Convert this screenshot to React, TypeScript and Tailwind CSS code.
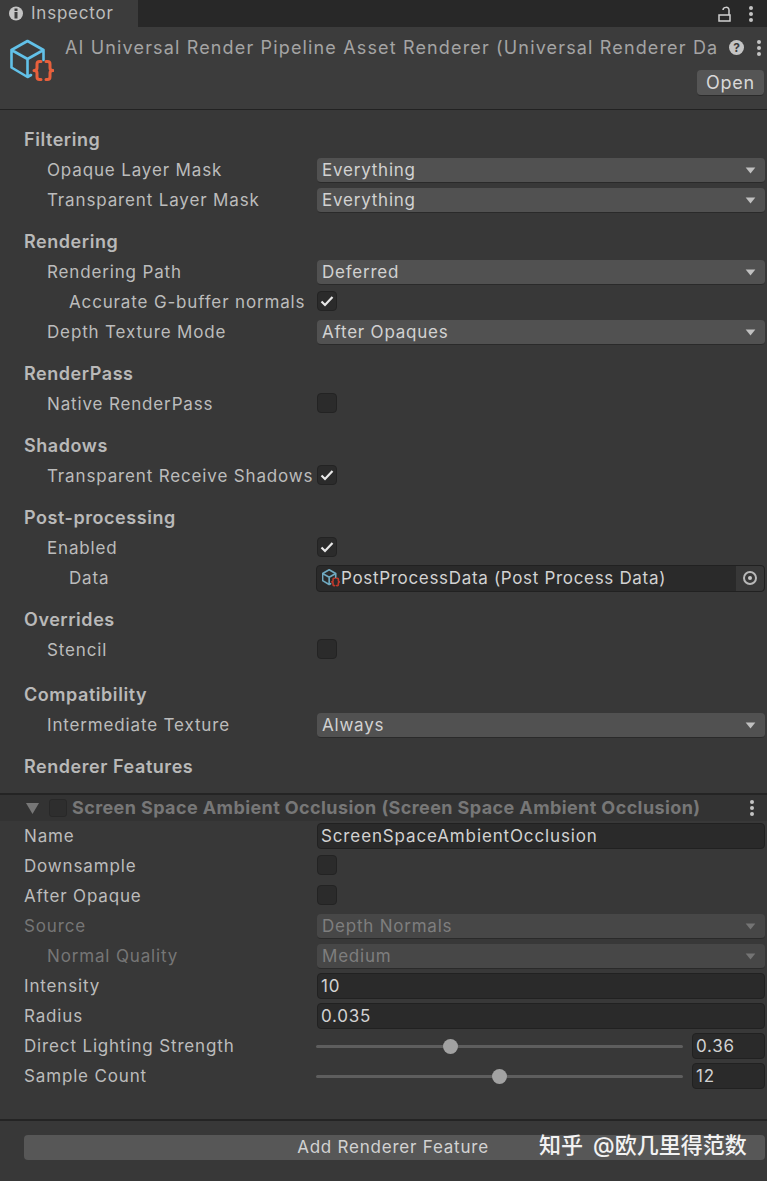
import { CSSProperties } from "react"

const font = { fontFamily: "Inter, 'Noto Sans CJK SC', sans-serif" } as CSSProperties

function CubeIcon({ size, small = false }: { size: number; small?: boolean }) {
  return (
    <svg width={size} height={size} viewBox="0 0 44 44" fill="none">
      <path
        d="M1.5 11 L17.5 2 L33.5 11 L33.5 21 M1.5 11 L1.5 28.5 L17.5 38 L21 36 M1.5 11 L17.5 20 L33.5 11 M17.5 20 L17.5 38"
        stroke={small ? "#6fa9c0" : "#62c1e8"}
        strokeWidth={small ? 4 : 2.6}
        strokeLinejoin="round"
        strokeLinecap="round"
      />
      <path
        d="M31 22.5 H29.5 Q27 22.5 27 25 V29 Q27 31.5 24 31.5 Q27 31.5 27 34 V38 Q27 40.5 29.5 40.5 H31 M36 22.5 H37.5 Q40 22.5 40 25 V29 Q40 31.5 43 31.5 Q40 31.5 40 34 V38 Q40 40.5 37.5 40.5 H36"
        stroke={small ? "#c0392b" : "#e8603c"}
        strokeWidth={small ? 4 : 3}
        strokeLinecap="round"
        strokeLinejoin="round"
      />
    </svg>
  )
}

function Dots() {
  return (
    <div className="flex flex-col gap-[2px] items-center w-[4px]">
      <div className="w-[4px] h-[4px] rounded-full bg-[#c4c4c4]" />
      <div className="w-[4px] h-[4px] rounded-full bg-[#c4c4c4]" />
      <div className="w-[4px] h-[4px] rounded-full bg-[#c4c4c4]" />
    </div>
  )
}

function Section({ title, className = "mt-[12px]" }: { title: string; className?: string }) {
  return (
    <div className={`h-[30px] flex items-center pl-[24px] font-semibold text-[18px] tracking-[0.55px] text-[#b9b9b9] ${className}`}>
      {title}
    </div>
  )
}

function Row({
  label,
  indent = 1,
  dim = false,
  children,
}: {
  label: string
  indent?: number
  dim?: boolean
  children?: React.ReactNode
}) {
  const pad = indent === 0 ? "pl-[24px]" : indent === 1 ? "pl-[47px]" : "pl-[69px]"
  return (
    <div className="h-[30px] flex items-center">
      <div className={`w-[316px] shrink-0 whitespace-nowrap tracking-[0.85px] ${pad} ${dim ? "text-[#767676]" : "text-[#bcbcbc]"}`}>
        {label}
      </div>
      <div className="flex-1 min-w-0 pl-px pr-[2px]">{children}</div>
    </div>
  )
}

function Dropdown({ value, dim = false }: { value: string; dim?: boolean }) {
  return (
    <div
      className={`h-[25px] rounded-[4px] pl-[5px] pr-[9px] pt-px flex items-center justify-between border-b border-[#2a2a2a] ${
        dim ? "bg-[#474747] text-[#7e7e7e]" : "bg-[#515151] text-[#d2d2d2]"
      }`}
    >
      <span>{value}</span>
      <svg width="11" height="7" viewBox="0 0 12 8">
        <path d="M0.5 0.5 L11.5 0.5 L6 7.5 Z" fill={dim ? "#747474" : "#c0c0c0"} />
      </svg>
    </div>
  )
}

function Check({ on = false }: { on?: boolean }) {
  return (
    <div className="w-[20px] h-[20px] mb-[2px] rounded-[4px] bg-[#2b2b2b] border border-[#232323] flex items-center justify-center">
      {on && (
        <svg width="14" height="12" viewBox="0 0 14 12" fill="none">
          <path d="M1.5 6.5 L5 10 L12.5 2" stroke="#e8e8e8" strokeWidth="2.2" />
        </svg>
      )}
    </div>
  )
}

function TextField({ value, className = "" }: { value: string; className?: string }) {
  return (
    <div className={`h-[26px] rounded-[4px] bg-[#2a2a2a] border border-[#212121] pl-[3px] flex items-center text-[#d2d2d2] ${className}`}>
      {value}
    </div>
  )
}

function Slider({ pos, value }: { pos: number; value: string }) {
  return (
    <div className="flex items-center -ml-px">
      <div className="relative w-[367px] h-[3px] rounded-full bg-[#5e5e5e]">
        <div
          className="absolute top-[-6px] w-[15px] h-[15px] rounded-full bg-[#a2a2a2]"
          style={{ left: pos }}
        />
      </div>
      <TextField value={value} className="ml-[9px] flex-1" />
    </div>
  )
}

export default function App() {
  return (
    <div style={font} className="w-[767px] h-[1181px] overflow-hidden bg-[#383838] text-[17px] tracking-[0.78px] leading-none">
      {/* tab bar */}
      <div className="h-[27px] bg-[#282828] flex items-stretch">
        <div className="w-[138px] bg-[#3c3c3c] flex items-center pl-[9px] gap-[8px] text-[#bdbdbd]">
          <svg width="14" height="15" viewBox="0 0 14 15">
            <circle cx="7" cy="7.5" r="7" fill="#c4c4c4" />
            <rect x="5.5" y="2.5" width="3" height="2.5" fill="#3c3c3c" />
            <rect x="5.5" y="6" width="3" height="6.5" fill="#3c3c3c" />
          </svg>
          <span>Inspector</span>
        </div>
        <div className="flex-1 flex items-center justify-end pr-[14px] gap-[18px]">
          <svg width="13" height="16" viewBox="0 0 13 16" fill="none" stroke="#d0d0d0" strokeWidth="1.5">
            <path d="M1 9 H12 V15 H1 Z" />
            <path d="M5 4 C5 1 11 0 11 4 V9" />
          </svg>
          <Dots />
        </div>
      </div>

      {/* asset header */}
      <div className="h-[83px] bg-[#3c3c3c] border-b border-[#222222] flex">
        <div className="w-[65px] shrink-0 pl-[10px] pt-[12px]">
          <CubeIcon size={44} />
        </div>
        <div className="flex-1 min-w-0 flex flex-col">
          <div className="h-[41px] flex items-center">
            <div className="w-[652px] whitespace-nowrap text-[18px] tracking-[1.15px] text-[#a4a4a4]">
              AI Universal Render Pipeline Asset Renderer (Universal Renderer Da
            </div>
            <div className="ml-[12px] w-[15px] h-[15px] rounded-full bg-[#c4c4c4] flex items-center justify-center text-[12px] font-bold text-[#3c3c3c] tracking-normal">
              ?
            </div>
            <div className="ml-[13px]">
              <Dots />
            </div>
          </div>
          <div className="flex justify-end pr-[3px] pt-[2px]">
            <div className="w-[67px] h-[26px] rounded-[4px] bg-[#555555] border-b border-[#2a2a2a] flex items-center justify-center text-[18px] text-[#d8d8d8]">
              Open
            </div>
          </div>
        </div>
      </div>

      {/* settings */}
      <div className="pt-[15px]">
        <Section title="Filtering" className="" />
        <Row label="Opaque Layer Mask"><Dropdown value="Everything" /></Row>
        <Row label="Transparent Layer Mask"><Dropdown value="Everything" /></Row>

        <Section title="Rendering" />
        <Row label="Rendering Path"><Dropdown value="Deferred" /></Row>
        <Row label="Accurate G-buffer normals" indent={2}><Check on /></Row>
        <Row label="Depth Texture Mode"><Dropdown value="After Opaques" /></Row>

        <Section title="RenderPass" />
        <Row label="Native RenderPass"><Check /></Row>

        <Section title="Shadows" />
        <Row label="Transparent Receive Shadows"><Check on /></Row>

        <Section title="Post-processing" />
        <Row label="Enabled"><Check on /></Row>
        <Row label="Data" indent={2}>
          <div className="h-[27px] -ml-px rounded-[4px] bg-[#2a2a2a] border border-[#212121] pl-[5px] flex items-center text-[#d2d2d2] tracking-[0.68px]">
            <CubeIcon size={18} small />
            <span className="flex-1 ml-px">PostProcessData (Post Process Data)</span>
            <div className="w-[28px] h-full bg-[#383838] rounded-r-[4px] flex items-center justify-center">
              <div className="w-[14px] h-[14px] rounded-full border-2 border-[#b8b8b8] flex items-center justify-center">
                <div className="w-[4px] h-[4px] rounded-full bg-[#c8c8c8]" />
              </div>
            </div>
          </div>
        </Row>

        <Section title="Overrides" />
        <Row label="Stencil"><Check /></Row>

        <Section title="Compatibility" className="mt-[15px]" />
        <Row label="Intermediate Texture"><Dropdown value="Always" /></Row>

        <Section title="Renderer Features" className="mt-[12px]" />
      </div>

      {/* renderer feature */}
      <div className="mt-[11px] h-[28px] bg-[#333333] border-t-2 border-[#242424] flex items-center pl-[26px] pr-[13px]">
        <svg width="13" height="11" viewBox="0 0 13 11">
          <path d="M0 0 H13 L6.5 11 Z" fill="#777777" />
        </svg>
        <div className="ml-[10px] w-[18px] h-[18px] rounded-[3px] bg-[#2e2e2e] border border-[#282828]" />
        <div className="ml-[5px] flex-1 font-bold text-[18px] text-[#777777] whitespace-nowrap tracking-[0.4px]">
          Screen Space Ambient Occlusion (Screen Space Ambient Occlusion)
        </div>
        <Dots />
      </div>
      <div>
        <Row label="Name" indent={0}><TextField value="ScreenSpaceAmbientOcclusion" className="tracking-[0.87px]" /></Row>
        <Row label="Downsample" indent={0}><Check /></Row>
        <Row label="After Opaque" indent={0}><Check /></Row>
        <Row label="Source" indent={0} dim><Dropdown value="Depth Normals" dim /></Row>
        <Row label="Normal Quality" dim><Dropdown value="Medium" dim /></Row>
        <Row label="Intensity" indent={0}><TextField value="10" /></Row>
        <Row label="Radius" indent={0}><TextField value="0.035" /></Row>
        <Row label="Direct Lighting Strength" indent={0}><Slider pos={127} value="0.36" /></Row>
        <Row label="Sample Count" indent={0}><Slider pos={176} value="12" /></Row>
      </div>

      {/* footer */}
      <div className="mt-[28px] border-t-2 border-[#242424] pt-[14px] pl-[24px] pr-[2px]">
        <div className="relative h-[25px] rounded-[4px] bg-[#575757] flex items-center justify-center text-[#d2d2d2] pr-[3px]">
          Add Renderer Feature
          <span className="absolute left-[515px] top-[-1px] text-[22px] tracking-normal text-[#f2f2f2] whitespace-nowrap font-medium">
            知乎<span className="ml-[10px]">@欧几里得范数</span>
          </span>
        </div>
      </div>
    </div>
  )
}
